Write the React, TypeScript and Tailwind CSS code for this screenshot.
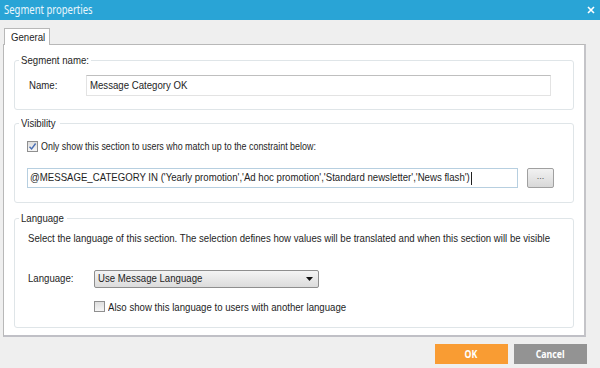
import React from "react";

const font = { fontFamily: '"Liberation Sans", Arial, sans-serif' };

function T({ children, className = "scale-x-[0.875]" }: { children: React.ReactNode; className?: string }) {
  return (
    <span className={"inline-block whitespace-nowrap origin-left " + className}>{children}</span>
  );
}

function Legend({ children, w }: { children: React.ReactNode; w: string }) {
  return (
    <span className={"absolute -top-[8px] left-[4px] bg-white pl-[2px] h-[14px] text-[11px] leading-[14px] text-[#1e1e1e] " + w}>
      <T>{children}</T>
    </span>
  );
}

export default function App() {
  return (
    <div className="w-[600px] h-[368px] bg-[#efefef] flex flex-col overflow-hidden text-[#1e1e1e]" style={font}>
      <div className="h-[20px] bg-[#29a4d6] flex items-center justify-between pl-[4px] pr-[4px]">
        <span className="text-[#eaf6fc] text-[12.5px]" style={{ fontFamily: '"Noto Sans", sans-serif' }}>
          <T className="scale-x-[0.76]">Segment properties</T>
        </span>
        <svg width="8" height="8" viewBox="0 0 8 8" className="mr-[1px]">
          <path d="M1 1 L7 7 M7 1 L1 7" stroke="white" strokeWidth="1.6" />
        </svg>
      </div>
      <div className="pl-[3px] pr-[14px] pt-[7px] flex flex-col">
        <div className="flex">
          <div className="ml-[1px] h-[17px] w-[46px] bg-white border border-b-0 border-[#b8b8b8] flex items-center pl-[6px] text-[11px] relative top-[1px]">
            <T>General</T>
          </div>
        </div>
        <div className="h-[293px] bg-white border border-[#b8b8b8] border-r-2 border-b-2 border-r-[#c4c4c8] border-b-[#c0c0c6] px-[10px] pt-[15px] flex flex-col text-[11px]">
          {/* Segment name */}
          <div className="relative h-[50px] border border-[#dfe5e8] rounded-[3px] flex items-center">
            <Legend w="w-[72px]">Segment name:</Legend>
            <span className="ml-[14px] w-[57px]"><T>Name:</T></span>
            <div className="w-[465px] h-[21px] border border-[#e3e3e3] border-t-[#bfbfbf] flex items-center pl-[3px]">
              <T>Message Category OK</T>
            </div>
          </div>
          {/* Visibility */}
          <div className="relative mt-[13px] h-[80px] border border-[#dfe5e8] rounded-[3px] flex flex-col">
            <Legend w="w-[41px]">Visibility</Legend>
            <div className="flex items-center ml-[12px] mt-[14px]">
              <div className="w-[11px] h-[11px] border border-[#8f8f8f] bg-gradient-to-b from-[#dedede] to-[#f6f6f6] flex items-center justify-center">
                <svg width="9" height="9" viewBox="0 0 9 9">
                  <path d="M1.5 4.8 L3.6 7 L7.6 1.5" stroke="#4a6fb5" strokeWidth="1.4" fill="none" />
                </svg>
              </div>
              <span className="ml-[3px]"><T className="scale-x-[0.81]">Only show this section to users who match up to the constraint below:</T></span>
            </div>
            <div className="flex items-center ml-[12px] mt-[13px]">
              <div className="w-[491px] h-[20px] border border-[#b7cfe0] flex items-center pl-[2px] overflow-hidden">
                <T>
                  @MESSAGE_CATEGORY IN ('Yearly promotion','Ad hoc promotion','Standard newsletter','News flash')
                  <span className="inline-block w-[1px] h-[13px] bg-black ml-[1px] align-middle" />
                </T>
              </div>
              <div className="ml-[9px] w-[27px] h-[20px] border border-[#a0a0a0] rounded-[2px] bg-gradient-to-b from-[#f2f2f2] to-[#d8d8d8] flex items-center justify-center text-[9px] text-[#555] pb-[2px]">
                ...
              </div>
            </div>
          </div>
          {/* Language */}
          <div className="relative mt-[15px] h-[110px] border border-[#dfe5e8] rounded-[3px] flex flex-col">
            <Legend w="w-[48px]">Language</Legend>
            <div className="ml-[13px] mt-[11px]">
              <T>Select the language of this section. The selection defines how values will be translated and when this section will be visible</T>
            </div>
            <div className="flex items-center ml-[13px] mt-[23px]">
              <span className="w-[66px]"><T>Language:</T></span>
              <div className="w-[225px] h-[18px] border border-[#8e8e8e] rounded-[2px] bg-gradient-to-b from-[#f4f4f4] to-[#dcdcdc] flex items-center justify-between pl-[3px] pr-[5px]">
                <T>Use Message Language</T>
                <svg width="7" height="4" viewBox="0 0 7 4"><path d="M0 0 H7 L3.5 4 Z" fill="#111" /></svg>
              </div>
            </div>
            <div className="flex items-center ml-[79px] mt-[11px]">
              <div className="w-[11px] h-[11px] border border-[#8f8f8f] bg-gradient-to-b from-[#dedede] to-[#f6f6f6]" />
              <span className="ml-[3px]"><T>Also show this language to users with another language</T></span>
            </div>
          </div>
        </div>
        <div className="flex justify-end gap-[6px] mt-[7px] -mr-[1px]" style={{ fontFamily: '"Noto Sans", sans-serif' }}>
          <div className="w-[73px] h-[20px] bg-[#f99c33] text-white text-[11px] font-bold flex items-center justify-center">
            <span className="inline-block scale-x-[0.8]">OK</span>
          </div>
          <div className="w-[73px] h-[20px] bg-[#939393] text-white text-[11px] font-bold flex items-center justify-center">
            <span className="inline-block scale-x-[0.8]">Cancel</span>
          </div>
        </div>
      </div>
    </div>
  );
}
